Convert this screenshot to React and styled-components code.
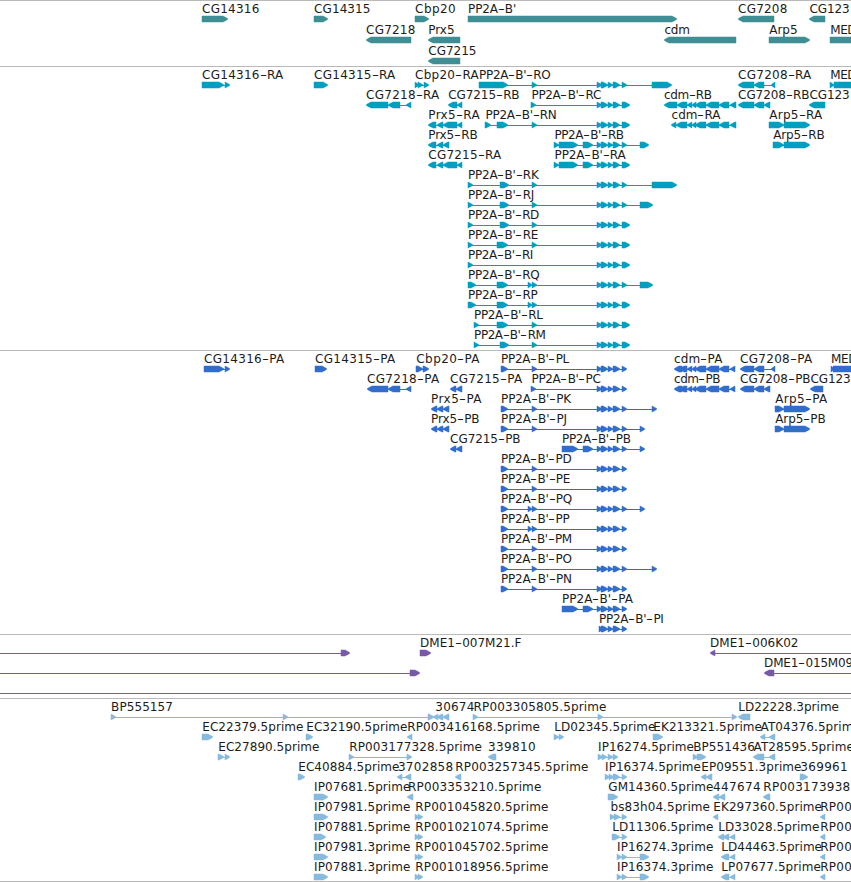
import React from "react";
import styled, { createGlobalStyle } from "styled-components";

const GlobalStyle = createGlobalStyle`
  html, body { margin: 0; background: #fff; }
`;

const Browser = styled.main`
  width: 851px;
  height: 882px;
  overflow: hidden;
  display: flex;
  flex-direction: column;
  background: #fff;
  color: #1c1c1c;
  font: 12px/14px "DejaVu Sans", sans-serif;
`;

const TrackSection = styled.section`
  flex: none;
  box-sizing: border-box;
  height: ${(p) => p.$height}px;
  border-top: 1px solid #b9b9b9;
`;

const FeatureRow = styled.div`
  position: relative;
  height: ${(p) => p.$height}px;
`;

const Glyphs = styled.svg`
  display: block;
  position: absolute;
  left: 0;
  top: 15px;
  width: 851px;
  height: 6px;
  overflow: visible;
  color: ${(p) => p.$color};
`;

const LabelText = styled.span`
  position: absolute;
  top: 1px;
  white-space: pre;
`;

const Hyphen = styled.span`
  display: inline-block;
  width: 7.2px;
  letter-spacing: 0;
  text-align: center;
  transform: scaleX(1.6);
`;

const Bottom = styled.div`
  height: 1px;
  background: #b9b9b9;
`;

const HYPHEN_WIDTH = 7.2;
const pen = document.createElement("canvas").getContext("2d");
pen.font = '12px "DejaVu Sans"';

// Spreads the letters so that a label covers its span on the map.
function Label({ text, from, to }) {
  const parts = text.split("-");
  const natural =
    pen.measureText(parts.join("")).width + (parts.length - 1) * HYPHEN_WIDTH;
  const spacing = (to - from + 1.4 - natural) / (text.length - parts.length + 1);
  return (
    <LabelText style={{ left: from - 0.4, letterSpacing: `${spacing}px` }}>
      {parts.map((part, i) => (
        <React.Fragment key={i}>
          {i > 0 && <Hyphen>-</Hyphen>}
          {part}
        </React.Fragment>
      ))}
    </LabelText>
  );
}

function exonPoints([a, b], dir) {
  const head = Math.min(b - a, 5);
  return dir === "R"
    ? `${a},0 ${b - head},0 ${b - head / 3},1.8 ${b},3 ${b - head / 3},4.2 ${b - head},6 ${a},6`
    : `${b},0 ${a + head},0 ${a + head / 3},1.8 ${a},3 ${a + head / 3},4.2 ${a + head},6 ${b},6`;
}

function Glyph({ dir, exons, span }) {
  const from = span ? span[0] : exons[0][0];
  const to = span ? span[1] : exons[exons.length - 1][1];
  return (
    <g fill="currentColor">
      {(span || exons.length > 1) && (
        <rect x={from + 1} y={3} width={to - from - 2} height={1} />
      )}
      {exons.map((e, i) => (
        <polygon
          key={i}
          points={exonPoints(e, dir)}
          stroke="currentColor"
          strokeWidth={0.5}
        />
      ))}
    </g>
  );
}

// Feature: [label, label start, label end, direction, exons, optional full span]
const T = [[597, 602], [601, 608], [608, 613], [613, 620], [622, 627]];
const U = [[597, 602], [601, 608], [608, 613], [613, 620], [622, 630]];
const CDM = [[687, 692], [692, 696], [695, 706], [706, 719], [719, 729]];
const MID = [532, 537];
const pair = [[528, 532], MID];
const short = [497, 508];
const narrow = [500, 509];

const genes = [
  [
    ["CG14316", 202.5, 258.5, "R", [[202, 228]]],
    ["CG14315", 314.5, 369.5, "R", [[314, 328]]],
    ["Cbp20", 415.5, 455, "R", [[415, 429]]],
    ["PP2A-B'", 468.5, 515, "R", [[468, 677]]],
    ["CG7208", 738.5, 786.5, "L", [[738, 774]]],
    ["CG123", 810, 848.6, "L", [[809, 825]]],
  ],
  [
    ["CG7218", 366.5, 414.5, "L", [[366, 411]]],
    ["Prx5", 428.7, 453.5, "L", [[428, 460]]],
    ["cdm", 665, 688.5, "L", [[664, 736]]],
    ["Arp5", 769.7, 796.5, "R", [[769, 810]]],
    ["MED", 830.7, 855, "R", [[830, 870]]],
  ],
  [["CG7215", 428.7, 475.5, "L", [[428, 460]]]],
];

const b1 = [468, 473];
const b2 = [468, 476];
const transcripts = [
  [
    ["CG14316-RA", 202.5, 282.5, "R", [[202, 224], [225, 230]]],
    ["CG14315-RA", 314.5, 394.5, "R", [[314, 328]]],
    ["Cbp20-RA", 415.5, 478, "R", [[415, 419], [418, 423], [424, 429]]],
    ["PP2A-B'-RO", 479.5, 549.5, "R", [[479, 508], MID, ...T, [652, 672]]],
    ["CG7208-RA", 738.5, 810.5, "L", [[738, 754], [754, 764], [771, 775]]],
    ["MED", 830.7, 855, "R", [[830, 834], [834, 870]]],
  ],
  [
    ["CG7218-RA", 366.5, 438.5, "L", [[366, 388], [388, 400], [406, 411]]],
    ["CG7215-RB", 448.7, 518.5, "L", [[448, 457], [457, 462]]],
    ["PP2A-B'-RC", 532, 600, "R", [[531, 536], ...U]],
    ["cdm-RB", 664.5, 710.5, "L", [[664, 677], [677, 687], ...CDM, [730, 736]]],
    ["CG7208-RB", 738.5, 808.5, "L", [[738, 754], [754, 764], [764, 770]]],
    ["CG123", 810, 848.6, "L", [[809, 825]]],
  ],
  [
    ["Prx5-RA", 428.7, 479, "L", [[428, 436], [437, 443], [443, 457], [457, 462]]],
    ["PP2A-B'-RN", 486, 555.5, "R", [[485, 491], short, MID, ...U]],
    ["cdm-RA", 672, 719.5, "L", [[671, 676], [676, 687], ...CDM, [730, 736]]],
    ["Arp5-RA", 769.7, 821.5, "R", [[769, 784], [784, 810]]],
  ],
  [
    ["Prx5-RB", 428.7, 476.5, "L", [[428, 436], [437, 443], [443, 449]]],
    ["PP2A-B'-RB", 555, 622.5, "R", [[554, 559], [559, 578], [583, 593], ...T, [640, 649]]],
    ["Arp5-RB", 773.7, 823.5, "R", [[773, 784], [784, 810]]],
  ],
  [
    ["CG7215-RA", 428.7, 500.5, "L", [[428, 436], [437, 443], [443, 457], [457, 462]]],
    ["PP2A-B'-RA", 555, 624.5, "R", [[554, 559], [559, 578], [583, 593], ...U]],
  ],
  [["PP2A-B'-RK", 468.5, 537.5, "R", [b1, narrow, MID, ...T, [652, 677]]]],
  [["PP2A-B'-RJ", 468.5, 533, "R", [b1, narrow, MID, ...T, [640, 653]]]],
  [["PP2A-B'-RD", 468.5, 538, "R", [b1, narrow, MID, ...U]]],
  [["PP2A-B'-RE", 468.5, 537, "R", [b1, short, MID, ...U]]],
  [["PP2A-B'-RI", 468.5, 532, "R", [b1, ...U]]],
  [["PP2A-B'-RQ", 468.5, 538.5, "R", [b2, short, ...pair, ...T, [640, 653]]]],
  [["PP2A-B'-RP", 468.5, 536.5, "R", [b2, short, ...pair, ...U]]],
  [["PP2A-B'-RL", 474.5, 541.5, "R", [[474, 479], short, MID, ...U]]],
  [["PP2A-B'-RM", 474.5, 544.5, "R", [[474, 479], narrow, MID, ...U]]],
];

const p1 = [501, 508];
const prx = [[431, 437], [437, 443], [443, 449]];
const proteins = [
  [
    ["CG14316-PA", 204.5, 283.5, "R", [[204, 224], [225, 230]]],
    ["CG14315-PA", 315.5, 394.5, "R", [[315, 327]]],
    ["Cbp20-PA", 416.7, 479, "R", [[416, 423], [423, 429]]],
    ["PP2A-B'-PL", 501.5, 568, "R", [p1, MID, ...T]],
    ["cdm-PA", 674.5, 721.5, "L", [[674, 682], [679, 687], ...CDM, [730, 735]]],
    ["CG7208-PA", 740.5, 811.5, "L", [[740, 754], [754, 764], [771, 775]]],
    ["MED", 831.5, 856, "R", [[831, 834], [833, 870]]],
  ],
  [
    ["CG7218-PA", 367.5, 438.5, "L", [[367, 388], [388, 400], [406, 411]]],
    ["CG7215-PA", 450.5, 521.5, "L", [[450, 456], [456, 462]]],
    ["PP2A-B'-PC", 532, 599.5, "R", [[531, 536], ...T]],
    ["cdm-PB", 674.5, 719, "L", [[674, 682], [679, 687], ...CDM, [730, 735]]],
    ["CG7208-PB", 740.5, 809.5, "L", [[740, 754], [754, 764], [764, 770]]],
    ["CG123", 811, 849.5, "L", [[810, 823]]],
  ],
  [
    ["Prx5-PA", 431.5, 481, "L", prx],
    ["PP2A-B'-PK", 501.5, 570, "R", [p1, MID, ...T, [652, 657]]],
    ["Arp5-PA", 775.7, 826.5, "R", [[775, 784], [784, 810]]],
  ],
  [
    ["Prx5-PB", 431.5, 478.5, "L", prx],
    ["PP2A-B'-PJ", 501.5, 566, "R", [p1, MID, ...T, [640, 645]]],
    ["Arp5-PB", 775.7, 824.5, "R", [[775, 784], [784, 810]]],
  ],
  [
    ["CG7215-PB", 450.5, 519.5, "L", [[450, 456], [456, 462]]],
    ["PP2A-B'-PB", 562.5, 629.5, "R", [[562, 578], [583, 593], ...T, [640, 645]]],
  ],
  [["PP2A-B'-PD", 501.5, 570.5, "R", [p1, MID, ...T]]],
  [["PP2A-B'-PE", 501.5, 569, "R", [p1, MID, ...T]]],
  [["PP2A-B'-PQ", 501.5, 571, "R", [p1, ...pair, ...T, [640, 645]]]],
  [["PP2A-B'-PP", 501.5, 568.5, "R", [p1, ...pair, ...T]]],
  [["PP2A-B'-PM", 501.5, 570.7, "R", [p1, MID, ...T]]],
  [["PP2A-B'-PO", 501.5, 570.7, "R", [p1, MID, ...T, [652, 657]]]],
  [["PP2A-B'-PN", 501.5, 570.7, "R", [p1, MID, ...T]]],
  [["PP2A-B'-PA", 562.5, 632, "R", [[562, 578], [583, 593], ...T]]],
  [["PP2A-B'-PI", 599.5, 662.5, "R", [[599, 603], ...T.slice(1)]]],
];

const clones = [
  [
    ["", 0, 0, "R", [[341, 350]], [-10, 350]],
    ["DME1-007M21.F", 420.5, 520.5, "R", [[420, 431]]],
    ["DME1-006K02", 710.5, 797.5, "L", [[710, 715]], [710, 870]],
  ],
  [
    ["", 0, 0, "R", [[410, 420]], [-10, 420]],
    ["DME1-015M09", 764.5, 852, "L", [[764, 774]], [764, 870]],
  ],
  [["", 0, 0, "R", [], [-10, 870]]],
];

const tail = ["RP00", 820.7, 851, "L", [[820, 825]]];
const rp = [[415, 419], [418, 423]];
const ests = [
  [
    ["BP555157", 111.5, 172, "R", [[111, 116], [283, 288], [428, 434]]],
    ["30674", 435.7, 473.5, "L", [[433, 438], [437, 443], [443, 449]]],
    ["RP003305805.5prime", 474, 605.5, "R", [[473, 478], [598, 603], [732, 737]]],
    ["LD22228.3prime", 738.7, 838, "L", [[738, 750]]],
  ],
  [
    ["EC22379.5prime", 202.7, 302.5, "R", [[202, 213]]],
    ["EC32190.5prime", 306.7, 406.5, "R", [[306, 313]]],
    ["RP003416168.5prime", 407.7, 539, "L", [[407, 412]]],
    ["LD02345.5prime", 554.7, 654.5, "R", [[554, 559], [559, 564]]],
    ["EK213321.5prime", 653.7, 761, "R", [[653, 663]]],
    ["AT04376.5prime", 761, 860, "L", [[760, 765], [769, 775]]],
  ],
  [
    ["EC27890.5prime", 218.7, 318.5, "R", [[218, 224], [225, 230]]],
    ["RP003177328.5prime", 349.7, 481, "R", [[349, 354], [407, 412]]],
    ["339810", 488.5, 535, "L", [[488, 496]]],
    ["IP16274.5prime", 598.5, 693, "R", [[598, 603], [602, 607], [608, 613], [613, 618]]],
    ["BP551436", 693.7, 754, "R", [[693, 698], [697, 706]]],
    ["AT28595.5prime", 754, 853, "L", [[753, 764], [769, 775]]],
  ],
  [
    ["EC40884.5prime", 298.7, 398.5, "R", [[298, 305]]],
    ["3702858", 398.3, 452.5, "L", [[397, 402], [405, 411]]],
    ["RP003257345.5prime", 455.7, 587.5, "L", [[455, 461]]],
    ["IP16374.5prime", 605.5, 700, "R", [[605, 610], [609, 614], [613, 620], [622, 627]]],
    ["EP09551.3prime", 701.7, 800.5, "L", [[701, 706], [706, 712]]],
    ["369961", 800.7, 847, "R", [[800, 808]]],
  ],
  [
    ["IP07681.5prime", 314.5, 409.5, "R", [[314, 328]]],
    ["RP003353210.5prime", 408.5, 540.5, "L", [[407, 413]]],
    ["GM14360.5prime", 608.7, 712.5, "R", [[608, 618]]],
    ["447674", 713.5, 760, "L", [[713, 719], [719, 725]]],
    ["RP003173938", 763.7, 849.5, "L", [[763, 770]]],
  ],
  [
    ["IP07981.5prime", 314.5, 409.5, "R", [[314, 328]]],
    ["RP001045820.5prime", 415.7, 547.5, "R", rp],
    ["bs83h04.5prime", 611, 709, "R", [[610, 615], [614, 620], [622, 627]]],
    ["EK297360.5prime", 713.7, 821, "L", [[713, 718]]],
    tail,
  ],
  [
    ["IP07881.5prime", 314.5, 409.5, "R", [[314, 326]]],
    ["RP001021074.5prime", 415.7, 547.5, "R", rp],
    ["LD11306.5prime", 612.7, 712.5, "R", [[612, 620], [622, 627]]],
    ["LD33028.5prime", 718.7, 818.5, "L", [[718, 724], [723, 729], [730, 735]]],
    tail,
  ],
  [
    ["IP07981.3prime", 314.5, 409.5, "R", [[314, 328]]],
    ["RP001045702.5prime", 415.7, 547.5, "R", rp],
    ["IP16274.3prime", 617.5, 712.5, "R", [[617, 622], [622, 627], [640, 649]]],
    ["LD44463.5prime", 721.7, 821, "L", [[721, 729], [730, 735]]],
    tail,
  ],
  [
    ["IP07881.3prime", 314.5, 409.5, "R", [[314, 328]]],
    ["RP001018956.5prime", 415.7, 547.5, "R", rp],
    ["IP16374.3prime", 617.5, 712.5, "R", [[617, 622], [622, 627], [640, 649]]],
    ["LP07677.5prime", 721.7, 820, "L", [[721, 729], [730, 735]]],
    tail,
  ],
];

const tracks = [
  { name: "genes", height: 66, pitch: 21, color: "#3f8e94", rows: genes },
  { name: "transcripts", height: 284, pitch: 20, color: "#009fc0", rows: transcripts },
  { name: "proteins", height: 284, pitch: 20, color: "#306dcd", rows: proteins },
  { name: "clones", height: 64, pitch: 20, color: "#7759a8", rows: clones },
  { name: "ests", height: 183, pitch: 20, color: "#86bbdd", rows: ests },
];

function Track({ track }) {
  return (
    <TrackSection $height={track.height}>
      {track.rows.map((row, i) => (
        <FeatureRow key={i} $height={track.pitch}>
          <Glyphs $color={track.color} viewBox="0 0 851 6" aria-hidden="true">
            {row.map(([, , , dir, exons, span], j) => (
              <Glyph key={j} dir={dir} exons={exons} span={span} />
            ))}
          </Glyphs>
          {row.map(
            ([text, from, to], j) =>
              text && <Label key={j} text={text} from={from} to={to} />
          )}
        </FeatureRow>
      ))}
    </TrackSection>
  );
}

export default function App() {
  return (
    <>
      <GlobalStyle />
      <Browser>
        {tracks.map((track) => (
          <Track key={track.name} track={track} />
        ))}
        <Bottom />
      </Browser>
    </>
  );
}
